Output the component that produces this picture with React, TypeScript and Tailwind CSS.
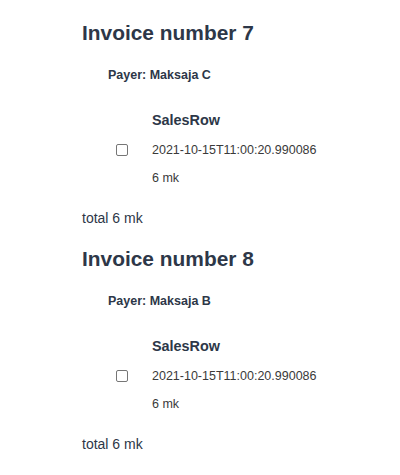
const invoices = [
  { id: 7, payer: 'Maksaja C', rows: [{ date: '2021-10-15T11:00:20.990086', price: 6 }] },
  { id: 8, payer: 'Maksaja B', rows: [{ date: '2021-10-15T11:00:20.990086', price: 6 }] },
];

function Invoice({ id, payer, rows }: (typeof invoices)[number]) {
  const total = rows.reduce((sum, r) => sum + r.price, 0);
  return (
    <section className="pb-[19px]">
      <h2 className="text-[20.9px] font-bold leading-6 text-[#2d3748]">Invoice number {id}</h2>
      <p className="mt-[22px] ml-[26px] text-[12.5px] font-bold leading-4 text-[#2d3748]">
        Payer: {payer}
      </p>
      {rows.map((row, i) => (
        <div key={i} className="mt-[27px] flex">
          <div className="flex w-[70px] items-start justify-end pr-[24px] pt-[34px]">
            <span className="block h-[12px] w-[12px] rounded-[2px] border-[1.5px] border-[#767676] bg-white" />
          </div>
          <div className="flex flex-col">
            <span className="text-[14.4px] font-bold leading-5 text-[#2d3748]">SalesRow</span>
            <span className="mt-[12px] text-[12.5px] leading-4 text-[#3a3a3a]">{row.date}</span>
            <span className="mt-3 text-[12.5px] leading-4 text-[#3a3a3a]">{row.price} mk</span>
          </div>
        </div>
      ))}
      <p className="mt-[22px] text-[14px] leading-5 text-[#2d3748]">total {total} mk</p>
    </section>
  );
}

export default function App() {
  return (
    <div className="min-h-[475px] bg-white pl-[82px] pt-[21px] font-['Liberation_Sans',Arial,sans-serif]">
      {invoices.map((inv) => (
        <Invoice key={inv.id} {...inv} />
      ))}
    </div>
  );
}
